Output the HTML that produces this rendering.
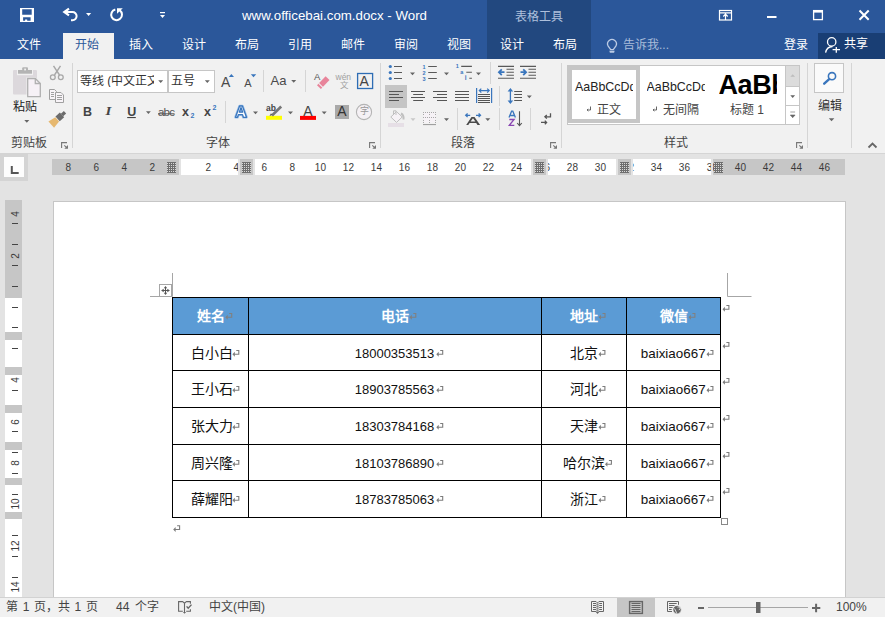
<!DOCTYPE html>
<html lang="zh-CN"><head><meta charset="utf-8">
<style>
*{margin:0;padding:0;box-sizing:border-box}
html,body{width:885px;height:617px;overflow:hidden;background:#e3e3e3;font-family:"Liberation Sans",sans-serif;position:relative}
.a{position:absolute}
.t{position:absolute;white-space:nowrap;line-height:1}
svg{position:absolute;overflow:visible}
#title{left:0;top:0;width:885px;height:59px;background:#2b579a}
#ctx{left:487px;top:0;width:104px;height:59px;background:#22487f}
#share{left:818px;top:33px;width:67px;height:26px;background:#193e74}
.tab{color:#fff;font-size:12px}
#ribbon{left:0;top:59px;width:885px;height:95px;background:#f1f1f1;border-bottom:1px solid #d5d5d5}
.sep{position:absolute;width:1px;background:#d5d5d5}
.lbl{color:#444;font-size:12px}
#status{left:0;top:597px;width:885px;height:20px;background:#f1f1f1;border-top:1px solid #d2d2d2}
#page{left:53px;top:201px;width:793px;height:396px;background:#fff;border:1px solid #c6c6c6;border-bottom:none}
.rul{position:absolute;background:#fff}
.rg{position:absolute;background:#c6c6c6}
.cell{position:absolute;height:37px;display:flex;justify-content:center;align-items:center;line-height:1;padding-left:1.4px;white-space:nowrap}
.rn{position:absolute;font-size:10px;color:#3a3a3a;line-height:1}
</style></head><body>
<!-- title bar -->
<div class="a" id="title"></div>
<div class="a" id="ctx"></div>
<div class="a" id="share"></div>
<div class="a" style="left:63px;top:33px;width:51px;height:26px;background:#f1f1f1"></div>
<div class="t" style="left:242px;top:9px;font-size:13.3px;color:#fff">www.officebai.com.docx - Word</div>
<div class="t" style="left:515px;top:11px;font-size:12px;color:#aec0dc">表格工具</div>

<div class="t tab" style="left:17px;top:38.6px">文件</div>
<div class="t tab" style="left:75px;top:38.6px;color:#2b579a">开始</div>
<div class="t tab" style="left:129px;top:38.6px">插入</div>
<div class="t tab" style="left:182px;top:38.6px">设计</div>
<div class="t tab" style="left:235px;top:38.6px">布局</div>
<div class="t tab" style="left:288px;top:38.6px">引用</div>
<div class="t tab" style="left:341px;top:38.6px">邮件</div>
<div class="t tab" style="left:394px;top:38.6px">审阅</div>
<div class="t tab" style="left:447px;top:38.6px">视图</div>
<div class="t tab" style="left:500px;top:38.6px">设计</div>
<div class="t tab" style="left:553px;top:38.6px">布局</div>
<div class="t tab" style="left:623px;top:39px;color:#a9bcd9">告诉我...</div>
<div class="t tab" style="left:784px;top:38.6px">登录</div>
<div class="t tab" style="left:844px;top:38.3px">共享</div>


<!-- title icons -->
<svg style="left:0;top:0" width="885" height="58">
 <path fill="#fff" fill-rule="evenodd" d="M20 8h14v14H20z M22.2 9.3h9.5v5.4h-9.5z M23.1 17.2h7.5v3.6h-3.4v-1.4h-2.1v1.4h-2z"/>
 <path d="M69 8.7L64.3 12L69 15.3" fill="none" stroke="#fff" stroke-width="2.2"/>
 <path d="M64 12H72.5A4.1 4.1 0 0 1 72.5 20.2H71" fill="none" stroke="#fff" stroke-width="2"/>
 <path d="M86 13h5.2l-2.6 3z" fill="#fff"/>
 <path d="M115.3 9.5A5.4 5.4 0 1 0 119.8 10.4" fill="none" stroke="#fff" stroke-width="2"/>
 <path d="M117 8.3h5.8L117 13.8z" fill="#fff"/>
 <rect x="160" y="12" width="5" height="1.2" fill="#fff"/>
 <path d="M160 15h5l-2.5 3z" fill="#fff"/>
 <rect x="719.5" y="10.5" width="12" height="9.5" fill="none" stroke="#fff" stroke-width="1.2"/>
 <path d="M719.5 12.8h12M725.5 13.5V20M723.3 16.5l2.2-2.4 2.2 2.4" fill="none" stroke="#fff" stroke-width="1.2"/>
 <rect x="767" y="16" width="9.5" height="2" fill="#fff"/>
 <rect x="813.6" y="10.6" width="8.8" height="9" fill="none" stroke="#fff" stroke-width="1.3"/>
 <rect x="813" y="10" width="10" height="2.6" fill="#fff"/>
 <path d="M859.5 10.5l9.2 9.2M868.7 10.5l-9.2 9.2" stroke="#fff" stroke-width="2"/>
 <circle cx="831.7" cy="41.9" r="4.2" fill="none" stroke="#fff" stroke-width="1.3"/>
 <path d="M825.6 52.6A7.5 7.5 0 0 1 832.5 46.5" fill="none" stroke="#fff" stroke-width="1.3"/>
 <path d="M832.6 49.7h7.4M836.3 47v5.7" stroke="#fff" stroke-width="1.3"/>
 <path d="M610.7 49.6L608.2 46.1A4.4 4.4 0 1 1 615.8 46.1L613.3 49.6Z" fill="none" stroke="#bccbe4" stroke-width="1.3"/>
 <path d="M609.3 50.8h5.4l-0.6 2h-4.2z" fill="#bccbe4"/>
</svg>

<!-- ribbon -->
<div class="a" id="ribbon"></div>
<div class="t lbl" style="left:10.5px;top:137px">剪贴板</div>
<div class="t lbl" style="left:206px;top:137px">字体</div>
<div class="t lbl" style="left:451px;top:137px">段落</div>
<div class="t lbl" style="left:664px;top:137px">样式</div>
<div class="sep" style="left:72px;top:63px;height:85px"></div>
<div class="sep" style="left:380px;top:63px;height:85px"></div>
<div class="sep" style="left:561px;top:63px;height:85px"></div>
<div class="sep" style="left:807px;top:63px;height:85px"></div>
<div class="sep" style="left:851px;top:63px;height:85px"></div>


<!-- clipboard -->
<svg style="left:0;top:0" width="885" height="153">
 <rect x="13" y="70" width="24" height="24.6" rx="1" fill="#dcd8dc"/>
 <rect x="17" y="69" width="16" height="6.2" fill="#f1f1f1"/>
 <rect x="18" y="70" width="14" height="3.7" fill="#b4b4b4"/>
 <rect x="22.2" y="67.2" width="5.8" height="3.5" rx="1" fill="#b4b4b4"/>
 <rect x="24.2" y="68.6" width="1.8" height="1.8" fill="#f1f1f1"/>
 <path d="M26.5 77.3h9l5.2 5.2v15H26.5z" fill="#f1f1f1"/>
 <path d="M27.7 78.5h7.6l5 5v13.2H27.7z" fill="#f6f1f6" stroke="#b0b0b0" stroke-width="1.3"/>
 <path d="M35.3 78.5v5h5" fill="none" stroke="#b0b0b0" stroke-width="1.3"/>
 <!-- scissors -->
 <path d="M53.5 65.8L59.5 75M60.5 65.8L54.5 75" stroke="#a8a8a8" stroke-width="1.4"/>
 <circle cx="52.8" cy="77.2" r="2.4" fill="none" stroke="#a8a8a8" stroke-width="1.3"/>
 <circle cx="60.8" cy="77.2" r="2.4" fill="none" stroke="#a8a8a8" stroke-width="1.3"/>
 <!-- copy -->
 <path d="M49.5 89.5h5l2 2v8H49.5z" fill="#f8f4f8" stroke="#a0a0a0" stroke-width="1"/>
 <path d="M51 92.5h3M51 94.5h3M51 96.5h3" stroke="#a0a0a0" stroke-width="1"/>
 <path d="M55.5 92.5h5.5l2.5 2.5v7.5H55.5z" fill="#f8f4f8" stroke="#a0a0a0" stroke-width="1"/>
 <path d="M57 95.5h5M57 97.5h5M57 99.5h5" stroke="#a0a0a0" stroke-width="1"/>
 <!-- format painter -->
 <g transform="translate(52,124) rotate(-42)">
  <path d="M-1 -4.2L7 -2.8V2.8L-1 4.2z" fill="#e6b870"/>
  <rect x="7.5" y="-3.2" width="6" height="6.4" fill="#6b6b6b"/>
  <rect x="13.5" y="-1.7" width="4" height="3.4" fill="#6b6b6b"/>
 </g>
 <path d="M24.3 120h5l-2.5 2.8z" fill="#666"/>
 <g transform="translate(0,0)"><path d="M61.6 148V142.6H67" fill="none" stroke="#777" stroke-width="1.1"/><path d="M64.3 148.8H68V145.1z" fill="#777"/><path d="M64.3 145.3l2.6 2.6" stroke="#777" stroke-width="1.1"/></g>
 <g transform="translate(308,0)"><path d="M61.6 148V142.6H67" fill="none" stroke="#777" stroke-width="1.1"/><path d="M64.3 148.8H68V145.1z" fill="#777"/><path d="M64.3 145.3l2.6 2.6" stroke="#777" stroke-width="1.1"/></g>
 <g transform="translate(489,0)"><path d="M61.6 148V142.6H67" fill="none" stroke="#777" stroke-width="1.1"/><path d="M64.3 148.8H68V145.1z" fill="#777"/><path d="M64.3 145.3l2.6 2.6" stroke="#777" stroke-width="1.1"/></g>
 <g transform="translate(735,0)"><path d="M61.6 148V142.6H67" fill="none" stroke="#777" stroke-width="1.1"/><path d="M64.3 148.8H68V145.1z" fill="#777"/><path d="M64.3 145.3l2.6 2.6" stroke="#777" stroke-width="1.1"/></g>
 <path d="M868.5 147.5l4-4 4 4" fill="none" stroke="#666" stroke-width="1.8"/>
</svg>
<div class="t" style="left:13px;top:101px;font-size:12px;color:#222">粘贴</div>
<!-- font group -->
<div class="a" style="left:77px;top:70px;width:91px;height:23px;background:#fff;border:1px solid #c6c6c6"></div>
<div class="a" style="left:168px;top:70px;width:47px;height:23px;background:#fff;border:1px solid #c6c6c6"></div>
<div class="t" style="left:80px;top:75px;font-size:12px;color:#333;width:74px;overflow:hidden">等线 (中文正文)</div>
<div class="t" style="left:171px;top:75px;font-size:12px;color:#333">五号</div>
<svg style="left:0;top:0" width="885" height="153">
 <path d="M158.2 80.2h5l-2.5 2.8z M204.8 80.2h5l-2.5 2.8z M291.2 80h5l-2.5 2.8z M410 72.5h5l-2.5 2.8z M444 72.5h5l-2.5 2.8z M476 72.5h5l-2.5 2.8z M526.8 95.5h5l-2.5 2.8z" fill="#666"/>
 <path d="M228.8 77h5.2l-2.6-3.1z" fill="#3a76bd"/>
 <path d="M250.8 74.2h5.4l-2.7 3.1z" fill="#3a76bd"/>
 <path d="M146 111.3h4.8l-2.4 2.6z M253 111.6h5l-2.5 2.6z M288 111.6h5l-2.5 2.6z M321.7 111.6h5l-2.5 2.6z M444 118.2h5l-2.5 2.7z M485.3 118.2h5l-2.5 2.7z" fill="#666"/>
 <path d="M410.5 118.2h5l-2.5 2.7z" fill="#c8c8c8"/>
</svg>
<div class="t" style="left:221px;top:74.8px;font-size:14px;color:#4a4a4a">A</div>
<div class="t" style="left:244.3px;top:78px;font-size:11px;color:#4a4a4a">A</div>
<div class="sep" style="left:263px;top:70px;height:22px"></div>
<div class="t" style="left:270.5px;top:74px;font-size:13px;color:#4a4a4a">Aa</div>
<div class="sep" style="left:305px;top:70px;height:22px"></div>


<!-- font row 2 -->
<div class="t" style="left:83px;top:105.8px;font-size:12.5px;font-weight:bold;color:#444">B</div>
<div class="t" style="left:106.3px;top:103.8px;font-size:13px;font-weight:bold;font-style:italic;font-family:'Liberation Serif',serif;color:#444;transform:scaleX(1.15)">I</div>
<div class="t" style="left:127.3px;top:105.8px;font-size:12.5px;font-weight:bold;color:#444">U</div>
<div class="t" style="left:158px;top:107px;font-size:11.5px;color:#555;letter-spacing:-0.8px">abc</div>
<div class="t" style="left:182px;top:106px;font-size:12.5px;font-weight:bold;color:#444">x</div>
<div class="t" style="left:190.5px;top:112px;font-size:7px;font-weight:bold;color:#3a76bd">2</div>
<div class="t" style="left:204px;top:106px;font-size:12.5px;font-weight:bold;color:#444">x</div>
<div class="t" style="left:212.6px;top:104px;font-size:7px;font-weight:bold;color:#3a76bd">2</div>
<svg style="left:0;top:0" width="885" height="153">
 <rect x="127.2" y="117" width="8.6" height="1.1" fill="#444"/>
 <rect x="158" y="113.3" width="16.5" height="1" fill="#555"/>
 <!-- text effects A -->
 <path d="M235.5 117.3L239.6 106h2.8L246.5 117.3h-3.1l-0.9-2.7h-4.1l-0.9 2.7z M239.3 112.2h3.4l-1.7-4.6z" fill="#fff" stroke="#9cc0e8" stroke-width="2.6" stroke-linejoin="round" fill-rule="evenodd"/>
 <path d="M235.5 117.3L239.6 106h2.8L246.5 117.3h-3.1l-0.9-2.7h-4.1l-0.9 2.7z M239.3 112.2h3.4l-1.7-4.6z" fill="#fff" stroke="#3a76bd" stroke-width="1.3" stroke-linejoin="round" fill-rule="evenodd"/>
 <!-- highlight -->
 <rect x="266" y="115.8" width="16" height="4" fill="#ffff00"/>
 <path d="M281.2 106.5L272 115.5" stroke="#777" stroke-width="2.6"/>
 <path d="M271 113.3L269.5 116L272.3 115" fill="#555"/>
 <!-- font color -->
 <rect x="300" y="115.9" width="16" height="4" fill="#ff0000"/>
 <!-- shading -->
 <rect x="335" y="105" width="14" height="14" fill="#a9a9a9"/>
 <!-- enclose -->
 <circle cx="364" cy="112" r="7.6" fill="#f5f1f5" stroke="#b4b4b4" stroke-width="1.1"/>
 <!-- clear format eraser -->
 <path d="M317 85.3L325.6 76.3L329.5 80L320.9 89z" fill="#e8849a"/>
 <path d="M318.5 83.2L323 87.6" stroke="#f1f1f1" stroke-width="1.1"/>
 <!-- char border -->
 <rect x="357.6" y="73.5" width="15" height="15" fill="none" stroke="#2e6db4" stroke-width="1.3"/>
</svg>
<div class="t" style="left:266px;top:103.5px;font-size:8.5px;font-weight:bold;color:#444">ab</div>
<div class="t" style="left:303.2px;top:104px;font-size:14px;color:#444">A</div>
<div class="t" style="left:337.2px;top:104.3px;font-size:14px;color:#333">A</div>
<div class="t" style="left:359.5px;top:106.5px;font-size:9px;color:#999">字</div>
<div class="t" style="left:314px;top:71.5px;font-size:9.5px;color:#555">A</div>
<div class="t" style="left:335.5px;top:73px;font-size:8.5px;color:#a0a0a0">wén</div>
<div class="t" style="left:339.5px;top:80.5px;font-size:8.5px;color:#a0a0a0">文</div>
<div class="t" style="left:359.5px;top:73.5px;font-size:14px;color:#444">A</div>
<div class="sep" style="left:225px;top:101px;height:22px"></div>


<!-- paragraph group -->
<svg style="left:0;top:0" width="885" height="153">
 <g fill="#3a76bd"><circle cx="390.3" cy="66.5" r="1.6"/><circle cx="390.3" cy="72.5" r="1.6"/><circle cx="390.3" cy="78.5" r="1.6"/></g>
 <path d="M394 66.5h8M394 72.5h8M394 78.5h8 M428.2 66.5h8.6M428.2 72.5h8.6M428.2 78.5h8.6 M461.2 66.4h10.7M466.3 72.3h5.6M469.3 78.3h2.6" stroke="#595959" stroke-width="1.1"/>
 <path d="M498 66.4h16M506.5 69.3h7.4M506.5 72.2h7.4M506.5 75.2h7.4M498 78.3h16 M520 66.4h16M528.5 69.3h7.5M528.5 72.2h7.5M528.5 75.2h7.5M520 78.3h16" stroke="#595959" stroke-width="1.1"/>
 <path d="M504.5 72.2h-5.5M501.8 69.3l-2.9 2.9 2.9 2.9 M520.5 72.2h5.5M523.2 69.3l2.9 2.9-2.9 2.9" fill="none" stroke="#3a76bd" stroke-width="1.8"/>
 <rect x="385" y="85" width="22" height="23" fill="#c5c5c5"/>
 <path d="M389 91.5h14M389 94.5h10M389 97.5h14M389 100.5h10 M411 91.5h14M413.2 94.5h9.8M411 97.5h14M413.2 100.5h9.8 M433 91.5h14M437 94.5h10M433 97.5h14M437 100.5h10 M455 91.5h14M455 94.5h14M455 97.5h14M455 100.5h14 M478 94.4h12M478 96.4h12M478 98.4h12M478 100.4h12M478 102.5h12 M514.2 91.5h7.8M514.2 94.5h7.8M514.2 97.5h7.8M514.2 100.5h7.8" stroke="#555" stroke-width="1.05"/>
 <path d="M476.6 88v15M491.6 88v15" stroke="#3a76bd" stroke-width="1.2"/>
 <path d="M479 90.6h10.5M481.3 88.6l-2 2 2 2M487.2 88.6l2 2-2 2" fill="none" stroke="#3a76bd" stroke-width="1.2"/>
 <path d="M510.4 90v12" stroke="#3a76bd" stroke-width="1.3"/><path d="M507.6 91.6L510.4 88.1L513.2 91.6z M507.6 100.4L510.4 103.9L513.2 100.4z" fill="#3a76bd"/>
 <!-- shading bucket disabled -->
 <rect x="388" y="123" width="16" height="4" fill="#e6dfe6"/>
 <path d="M390.8 117L396.5 111.6L402.2 117L396.5 122.4z" fill="#f6f2f6" stroke="#c0c0c0" stroke-width="1"/>
 <path d="M393.5 115V110.8h2.5V115" fill="none" stroke="#c0c0c0" stroke-width="1"/>
 <path d="M401 113.5q3 1.5 2.5 6" fill="none" stroke="#c0c0c0" stroke-width="2"/>
 <!-- borders -->
 <rect x="423.5" y="112.3" width="12.2" height="10.3" fill="#f6f2f6"/>
 <g fill="#a8a8a8">
 <path d="M423 112h1v1h-1zM425 112h1v1h-1zM427 112h1v1h-1zM429 112h1v1h-1zM431 112h1v1h-1zM433 112h1v1h-1zM435 112h1v1h-1z"/>
 <path d="M423 117h1v1h-1zM425 117h1v1h-1zM427 117h1v1h-1zM429 117h1v1h-1zM431 117h1v1h-1zM433 117h1v1h-1zM435 117h1v1h-1z"/>
 <path d="M423 114h1v1h-1zM423 120h1v1h-1zM423 122h1v1h-1zM429 114h1v1h-1zM429 120h1v1h-1zM429 122h1v1h-1zM435 114h1v1h-1zM435 120h1v1h-1zM435 122h1v1h-1z"/>
 </g>
 <rect x="423" y="124" width="13" height="1.1" fill="#a0a0a0"/>
 <!-- asian layout -->
 <path d="M466.2 125L471.5 117h3l5.6 8h-2.6l-1.3-2h-6.6l-1.3 2z M470.6 121.6h4.8l-2.4-3.4z" fill="#4a4a4a" fill-rule="evenodd"/>
 <path d="M465.7 115.3h4.5M467.6 113.5l-1.9 1.8 1.9 1.8 M480.5 115.3h-4.5M478.6 113.5l1.9 1.8-1.9 1.8" fill="none" stroke="#3a76bd" stroke-width="1.3"/>
 <!-- sort -->
 <path d="M509 117.6l2.6-6.4h1.2l2.6 6.4M510 115.5h4.3" fill="none" stroke="#3a76bd" stroke-width="1.3"/>
 <path d="M509.3 119.5h4.8l-4.8 5.8h5" fill="none" stroke="#8a47b3" stroke-width="1.3"/>
 <path d="M519.5 111.2v14M517.2 123l2.3 2.7 2.3-2.7" fill="none" stroke="#555" stroke-width="1.1"/>
 <!-- show hide -->
 <path d="M550.5 113.2v3.6h-5.5M546.8 115l-1.9 1.8 1.9 1.8 M541 122.4h5.6M544.8 120.6l1.8 1.8-1.8 1.8" fill="none" stroke="#555" stroke-width="1.3"/>
</svg>
<div class="sep" style="left:490px;top:62px;height:22px"></div>
<div class="sep" style="left:499px;top:86px;height:20px"></div>
<div class="sep" style="left:457px;top:108px;height:22px"></div>
<div class="sep" style="left:499px;top:108px;height:22px"></div>
<div class="sep" style="left:530px;top:108px;height:22px"></div>
<div class="t" style="left:422.5px;top:64px;font-size:5.5px;font-weight:bold;color:#3a76bd;line-height:6px;white-space:pre">1
2
3</div>
<div class="t" style="left:455.8px;top:64.3px;font-size:5.5px;font-weight:bold;color:#3a76bd">1</div>
<div class="t" style="left:460.2px;top:69.5px;font-size:5.5px;font-weight:bold;color:#3a76bd">a</div>
<div class="t" style="left:464.8px;top:74.8px;font-size:6.5px;font-weight:bold;color:#3a76bd">i</div>


<!-- styles group -->
<div class="a" style="left:567px;top:65px;width:233px;height:60px;background:#fff;border:1px solid #c6c6c6"></div>
<div class="a" style="left:568px;top:66px;width:72px;height:57px;border:4px solid #c6c6c6;background:#fff"></div>
<div class="a" style="left:785px;top:65px;width:15px;height:60px;border:1px solid #c6c6c6"></div>
<div class="a" style="left:786px;top:66px;width:13px;height:20.5px;background:#dcdcdc"></div>
<div class="a" style="left:785px;top:86px;width:15px;height:1px;background:#c6c6c6"></div>
<div class="a" style="left:785px;top:105px;width:15px;height:1px;background:#c6c6c6"></div>
<div class="t" style="left:575px;top:80.5px;font-size:12.4px;color:#222;width:58px;overflow:hidden">AaBbCcDd</div>
<div class="t" style="left:646.5px;top:80.5px;font-size:12.4px;color:#222;width:58px;overflow:hidden">AaBbCcDd</div>
<div class="t" style="left:718.5px;top:72px;font-size:27px;font-weight:bold;color:#000;width:58px;overflow:hidden;letter-spacing:-0.4px">AaBb</div>
<div class="t" style="left:597px;top:104px;font-size:12px;color:#444">正文</div>
<div class="t" style="left:662.5px;top:104px;font-size:12px;color:#444">无间隔</div>
<div class="t" style="left:730px;top:103.5px;font-size:12px;color:#444">标题 1</div>
<svg style="left:0;top:0" width="885" height="153">
 <path d="M590.5 106.5v3.5h-3.3M588.3 108.8l-1.2 1.2 1.2 1.2" fill="none" stroke="#555" stroke-width="0.9"/>
 <path d="M656.5 106.5v3.5h-3.3M654.3 108.8l-1.2 1.2 1.2 1.2" fill="none" stroke="#555" stroke-width="0.9"/>
 <path d="M790.3 76.7l2.4-2.5 2.4 2.5z" fill="#bdbdbd"/>
 <path d="M790.3 95.3h4.8l-2.4 2.7z" fill="#666"/>
 <path d="M790.3 112h4.8M790.3 115h4.8l-2.4 2.7z" fill="#666" stroke="#666" stroke-width="0.6"/>
 <!-- editing -->
 <rect x="814.5" y="63.5" width="29" height="29" fill="#fafafa" stroke="#c6c6c6" stroke-width="1"/>
 <circle cx="832" cy="76.2" r="3.6" fill="none" stroke="#3a76bd" stroke-width="1.6"/>
 <path d="M829.2 79.2l-5 4.5" stroke="#3a76bd" stroke-width="2.4" stroke-linecap="round"/>
 <path d="M828.8 118.2h5.5l-2.75 3z" fill="#666"/>
</svg>
<div class="t" style="left:818px;top:100px;font-size:12px;color:#333">编辑</div>

<!-- canvas -->
<div class="a" style="left:0;top:153px;width:28px;height:28px;background:#d4d4d4"></div>
<div class="a" style="left:4px;top:157px;width:20px;height:20px;background:#fdfdfd"></div>
<svg style="left:0;top:0" width="30" height="185"><path d="M11.8 166v7h6.9" fill="none" stroke="#555" stroke-width="2"/></svg>
<div class="a" style="left:52px;top:159px;width:793px;height:16px;background:#c6c6c6"></div>
<div class="a" style="left:181px;top:159px;width:530px;height:16px;background:#fff"></div>
<div class="rn" style="left:142.4px;top:162.5px;width:20px;text-align:center">2</div>
<div class="rn" style="left:114.4px;top:162.5px;width:20px;text-align:center">4</div>
<div class="rn" style="left:86.4px;top:162.5px;width:20px;text-align:center">6</div>
<div class="rn" style="left:58.4px;top:162.5px;width:20px;text-align:center">8</div>
<div class="rn" style="left:198.4px;top:162.5px;width:20px;text-align:center">2</div>
<div class="rn" style="left:226.4px;top:162.5px;width:20px;text-align:center">4</div>
<div class="rn" style="left:254.4px;top:162.5px;width:20px;text-align:center">6</div>
<div class="rn" style="left:282.4px;top:162.5px;width:20px;text-align:center">8</div>
<div class="rn" style="left:310.4px;top:162.5px;width:20px;text-align:center">10</div>
<div class="rn" style="left:338.4px;top:162.5px;width:20px;text-align:center">12</div>
<div class="rn" style="left:366.4px;top:162.5px;width:20px;text-align:center">14</div>
<div class="rn" style="left:394.4px;top:162.5px;width:20px;text-align:center">16</div>
<div class="rn" style="left:422.4px;top:162.5px;width:20px;text-align:center">18</div>
<div class="rn" style="left:450.4px;top:162.5px;width:20px;text-align:center">20</div>
<div class="rn" style="left:478.4px;top:162.5px;width:20px;text-align:center">22</div>
<div class="rn" style="left:506.4px;top:162.5px;width:20px;text-align:center">24</div>
<div class="rn" style="left:534.4px;top:162.5px;width:20px;text-align:center">26</div>
<div class="rn" style="left:562.4px;top:162.5px;width:20px;text-align:center">28</div>
<div class="rn" style="left:590.4px;top:162.5px;width:20px;text-align:center">30</div>
<div class="rn" style="left:618.4px;top:162.5px;width:20px;text-align:center">32</div>
<div class="rn" style="left:646.4px;top:162.5px;width:20px;text-align:center">34</div>
<div class="rn" style="left:674.4px;top:162.5px;width:20px;text-align:center">36</div>
<div class="rn" style="left:702.4px;top:162.5px;width:20px;text-align:center">38</div>
<div class="rn" style="left:730.4px;top:162.5px;width:20px;text-align:center">40</div>
<div class="rn" style="left:758.4px;top:162.5px;width:20px;text-align:center">42</div>
<div class="rn" style="left:786.4px;top:162.5px;width:20px;text-align:center">44</div>
<div class="rn" style="left:814.4px;top:162.5px;width:20px;text-align:center">46</div>
<div class="a" style="left:179px;top:159px;width:2px;height:16px;background:#e3e3e3"></div>
<div class="a" style="left:238px;top:159px;width:2px;height:16px;background:#e3e3e3"></div>
<div class="a" style="left:253px;top:159px;width:2px;height:16px;background:#e3e3e3"></div>
<div class="a" style="left:531px;top:159px;width:2px;height:16px;background:#e3e3e3"></div>
<div class="a" style="left:546px;top:159px;width:2px;height:16px;background:#e3e3e3"></div>
<div class="a" style="left:616px;top:159px;width:2px;height:16px;background:#e3e3e3"></div>
<div class="a" style="left:631px;top:159px;width:2px;height:16px;background:#e3e3e3"></div>
<div class="a" style="left:711px;top:159px;width:2px;height:16px;background:#e3e3e3"></div>
<div class="a" style="left:240px;top:159px;width:13px;height:16px;background:#c6c6c6"></div>
<div class="a" style="left:533px;top:159px;width:13px;height:16px;background:#c6c6c6"></div>
<div class="a" style="left:618px;top:159px;width:13px;height:16px;background:#c6c6c6"></div>
<svg style="left:167px;top:162px" width="9" height="11" shape-rendering="crispEdges"><path d="M0 0h9v11H0z" fill="#6e6e6e"/><path d="M0 1h1v1h-1zM0 3h1v1h-1zM0 5h1v1h-1zM0 7h1v1h-1zM0 9h1v1h-1zM2 1h1v1h-1zM2 3h1v1h-1zM2 5h1v1h-1zM2 7h1v1h-1zM2 9h1v1h-1zM4 1h1v1h-1zM4 3h1v1h-1zM4 5h1v1h-1zM4 7h1v1h-1zM4 9h1v1h-1zM6 1h1v1h-1zM6 3h1v1h-1zM6 5h1v1h-1zM6 7h1v1h-1zM6 9h1v1h-1zM8 1h1v1h-1zM8 3h1v1h-1zM8 5h1v1h-1zM8 7h1v1h-1zM8 9h1v1h-1z" fill="#d8d8d8"/></svg>
<svg style="left:242px;top:162px" width="9" height="11" shape-rendering="crispEdges"><path d="M0 0h9v11H0z" fill="#6e6e6e"/><path d="M0 1h1v1h-1zM0 3h1v1h-1zM0 5h1v1h-1zM0 7h1v1h-1zM0 9h1v1h-1zM2 1h1v1h-1zM2 3h1v1h-1zM2 5h1v1h-1zM2 7h1v1h-1zM2 9h1v1h-1zM4 1h1v1h-1zM4 3h1v1h-1zM4 5h1v1h-1zM4 7h1v1h-1zM4 9h1v1h-1zM6 1h1v1h-1zM6 3h1v1h-1zM6 5h1v1h-1zM6 7h1v1h-1zM6 9h1v1h-1zM8 1h1v1h-1zM8 3h1v1h-1zM8 5h1v1h-1zM8 7h1v1h-1zM8 9h1v1h-1z" fill="#d8d8d8"/></svg>
<svg style="left:535px;top:162px" width="9" height="11" shape-rendering="crispEdges"><path d="M0 0h9v11H0z" fill="#6e6e6e"/><path d="M0 1h1v1h-1zM0 3h1v1h-1zM0 5h1v1h-1zM0 7h1v1h-1zM0 9h1v1h-1zM2 1h1v1h-1zM2 3h1v1h-1zM2 5h1v1h-1zM2 7h1v1h-1zM2 9h1v1h-1zM4 1h1v1h-1zM4 3h1v1h-1zM4 5h1v1h-1zM4 7h1v1h-1zM4 9h1v1h-1zM6 1h1v1h-1zM6 3h1v1h-1zM6 5h1v1h-1zM6 7h1v1h-1zM6 9h1v1h-1zM8 1h1v1h-1zM8 3h1v1h-1zM8 5h1v1h-1zM8 7h1v1h-1zM8 9h1v1h-1z" fill="#d8d8d8"/></svg>
<svg style="left:620px;top:162px" width="9" height="11" shape-rendering="crispEdges"><path d="M0 0h9v11H0z" fill="#6e6e6e"/><path d="M0 1h1v1h-1zM0 3h1v1h-1zM0 5h1v1h-1zM0 7h1v1h-1zM0 9h1v1h-1zM2 1h1v1h-1zM2 3h1v1h-1zM2 5h1v1h-1zM2 7h1v1h-1zM2 9h1v1h-1zM4 1h1v1h-1zM4 3h1v1h-1zM4 5h1v1h-1zM4 7h1v1h-1zM4 9h1v1h-1zM6 1h1v1h-1zM6 3h1v1h-1zM6 5h1v1h-1zM6 7h1v1h-1zM6 9h1v1h-1zM8 1h1v1h-1zM8 3h1v1h-1zM8 5h1v1h-1zM8 7h1v1h-1zM8 9h1v1h-1z" fill="#d8d8d8"/></svg>
<svg style="left:714px;top:162px" width="9" height="11" shape-rendering="crispEdges"><path d="M0 0h9v11H0z" fill="#6e6e6e"/><path d="M0 1h1v1h-1zM0 3h1v1h-1zM0 5h1v1h-1zM0 7h1v1h-1zM0 9h1v1h-1zM2 1h1v1h-1zM2 3h1v1h-1zM2 5h1v1h-1zM2 7h1v1h-1zM2 9h1v1h-1zM4 1h1v1h-1zM4 3h1v1h-1zM4 5h1v1h-1zM4 7h1v1h-1zM4 9h1v1h-1zM6 1h1v1h-1zM6 3h1v1h-1zM6 5h1v1h-1zM6 7h1v1h-1zM6 9h1v1h-1zM8 1h1v1h-1zM8 3h1v1h-1zM8 5h1v1h-1zM8 7h1v1h-1zM8 9h1v1h-1z" fill="#d8d8d8"/></svg>
<div class="a" style="left:5px;top:200px;width:17px;height:397px;background:#c6c6c6"></div>
<div class="a" style="left:5px;top:298px;width:17px;height:299px;background:#fff"></div>
<div class="a" style="left:5px;top:332px;width:17px;height:8px;background:#c6c6c6"></div>
<div class="a" style="left:5px;top:367px;width:17px;height:8px;background:#c6c6c6"></div>
<div class="a" style="left:5px;top:405px;width:17px;height:8px;background:#c6c6c6"></div>
<div class="a" style="left:5px;top:442px;width:17px;height:8px;background:#c6c6c6"></div>
<div class="a" style="left:5px;top:478px;width:17px;height:7px;background:#c6c6c6"></div>
<div class="a" style="left:5px;top:512px;width:17px;height:7px;background:#c6c6c6"></div>
<svg style="left:0;top:0" width="30" height="617"><path d="M12 223.5h6M12 244.5h6M12 265.5h6M12 286.5h6M12 307.5h6M12 327.5h6M12 348.5h6M12 390.5h6M12 431.5h6M12 452.5h6M12 473.5h6M12 494.5h6M12 535.5h6M12 556.5h6M12 577.5h6" stroke="#444" stroke-width="1"/></svg>
<div class="rn" style="left:5.5px;top:208.5px;width:20px;height:10px;line-height:10px;text-align:center;transform:rotate(-90deg)">4</div>
<div class="rn" style="left:5.5px;top:250.5px;width:20px;height:10px;line-height:10px;text-align:center;transform:rotate(-90deg)">2</div>
<div class="rn" style="left:5.5px;top:375.2px;width:20px;height:10px;line-height:10px;text-align:center;transform:rotate(-90deg)">4</div>
<div class="rn" style="left:5.5px;top:416.5px;width:20px;height:10px;line-height:10px;text-align:center;transform:rotate(-90deg)">6</div>
<div class="rn" style="left:5.5px;top:458.2px;width:20px;height:10px;line-height:10px;text-align:center;transform:rotate(-90deg)">8</div>
<div class="rn" style="left:5.5px;top:499.2px;width:20px;height:10px;line-height:10px;text-align:center;transform:rotate(-90deg)">10</div>
<div class="rn" style="left:5.5px;top:540.5px;width:20px;height:10px;line-height:10px;text-align:center;transform:rotate(-90deg)">12</div>
<div class="rn" style="left:5.5px;top:581.8px;width:20px;height:10px;line-height:10px;text-align:center;transform:rotate(-90deg)">14</div>
<div class="a" id="page"></div>

<!-- table -->
<div class="a" style="left:172px;top:297px;width:549px;height:38px;background:#5b9bd5"></div>
<svg style="left:0;top:0" width="885" height="617">
 <g fill="#000">
 <rect x="172" y="297" width="549" height="1"/>
 <rect x="172" y="334" width="549" height="1"/>
 <rect x="172" y="370" width="549" height="1"/>
 <rect x="172" y="407" width="549" height="1"/>
 <rect x="172" y="444" width="549" height="1"/>
 <rect x="172" y="480" width="549" height="1"/>
 <rect x="172" y="517" width="549" height="1"/>
 <rect x="172" y="297" width="1" height="221"/>
 <rect x="248" y="297" width="1" height="221"/>
 <rect x="541" y="297" width="1" height="221"/>
 <rect x="626" y="297" width="1" height="221"/>
 <rect x="720" y="297" width="1" height="221"/>
 </g>
 <path d="M172.5 273v23.5M150 296.5h22.5M727.5 273v23.5M727.5 296.5h24" stroke="#a6a6a6" stroke-width="1"/>
 <rect x="159.5" y="284.5" width="12" height="12" fill="#fff" stroke="#a6a6a6" stroke-width="1"/>
 <path d="M165.5 287v7M162 290.5h7" fill="none" stroke="#555" stroke-width="1"/>
 <path d="M163.8 288.3L165.5 286.1L167.2 288.3z M163.8 292.7L165.5 294.9L167.2 292.7z M163.7 288.8L161.1 290.5L163.7 292.2z M167.3 288.8L169.9 290.5L167.3 292.2z" fill="#555"/>
 <rect x="721.5" y="518.5" width="6" height="6" fill="#fff" stroke="#888" stroke-width="1"/>
</svg>

<div class="cell" style="left:172px;top:297px;width:76px;font-size:14px;font-weight:bold;color:#fff;"><span>姓名</span></div>
<div class="cell" style="left:248px;top:297px;width:293px;font-size:14px;font-weight:bold;color:#fff;"><span>电话</span></div>
<div class="cell" style="left:541px;top:297px;width:85px;font-size:14px;font-weight:bold;color:#fff;"><span>地址</span></div>
<div class="cell" style="left:626px;top:297px;width:94px;font-size:14px;font-weight:bold;color:#fff;"><span>微信</span></div>
<div class="cell" style="left:172px;top:334px;width:76px;font-size:14px;color:#111;transform:translateX(1.5px);"><span>白小白</span></div>
<div class="cell" style="left:248px;top:334px;width:293px;font-size:13px;color:#111;transform:translate(-0.7px,1px);"><span>18000353513</span></div>
<div class="cell" style="left:541px;top:334px;width:85px;font-size:14px;color:#111;"><span>北京</span></div>
<div class="cell" style="left:626px;top:334px;width:94px;font-size:13.4px;color:#111;transform:translate(-0.5px,0.8px);"><span>baixiao667</span></div>
<div class="cell" style="left:172px;top:370px;width:76px;font-size:14px;color:#111;transform:translateX(1.5px);"><span>王小石</span></div>
<div class="cell" style="left:248px;top:370px;width:293px;font-size:13px;color:#111;transform:translate(-0.7px,1px);"><span>18903785563</span></div>
<div class="cell" style="left:541px;top:370px;width:85px;font-size:14px;color:#111;"><span>河北</span></div>
<div class="cell" style="left:626px;top:370px;width:94px;font-size:13.4px;color:#111;transform:translate(-0.5px,0.8px);"><span>baixiao667</span></div>
<div class="cell" style="left:172px;top:407px;width:76px;font-size:14px;color:#111;transform:translateX(1.5px);"><span>张大力</span></div>
<div class="cell" style="left:248px;top:407px;width:293px;font-size:13px;color:#111;transform:translate(-0.7px,1px);"><span>18303784168</span></div>
<div class="cell" style="left:541px;top:407px;width:85px;font-size:14px;color:#111;"><span>天津</span></div>
<div class="cell" style="left:626px;top:407px;width:94px;font-size:13.4px;color:#111;transform:translate(-0.5px,0.8px);"><span>baixiao667</span></div>
<div class="cell" style="left:172px;top:444px;width:76px;font-size:14px;color:#111;transform:translateX(1.5px);"><span>周兴隆</span></div>
<div class="cell" style="left:248px;top:444px;width:293px;font-size:13px;color:#111;transform:translate(-0.7px,1px);"><span>18103786890</span></div>
<div class="cell" style="left:541px;top:444px;width:85px;font-size:14px;color:#111;"><span>哈尔滨</span></div>
<div class="cell" style="left:626px;top:444px;width:94px;font-size:13.4px;color:#111;transform:translate(-0.5px,0.8px);"><span>baixiao667</span></div>
<div class="cell" style="left:172px;top:480px;width:76px;font-size:14px;color:#111;transform:translateX(1.5px);"><span>薛耀阳</span></div>
<div class="cell" style="left:248px;top:480px;width:293px;font-size:13px;color:#111;transform:translate(-0.7px,1px);"><span>18783785063</span></div>
<div class="cell" style="left:541px;top:480px;width:85px;font-size:14px;color:#111;"><span>浙江</span></div>
<div class="cell" style="left:626px;top:480px;width:94px;font-size:13.4px;color:#111;transform:translate(-0.5px,0.8px);"><span>baixiao667</span></div>
<svg style="left:0;top:0" width="885" height="617"><path d="M229.2 313.5h2.5v3.8H226.8" fill="none" stroke="#808080" stroke-width="1.1"/><path d="M227.7 314.8L225.3 317.3L227.7 319.8z" fill="#808080"/>
<path d="M413.3 313.5h2.5v3.8H410.9" fill="none" stroke="#808080" stroke-width="1.1"/><path d="M411.8 314.8L409.4 317.3L411.8 319.8z" fill="#808080"/>
<path d="M602.5 313.5h2.5v3.8H600.1" fill="none" stroke="#808080" stroke-width="1.1"/><path d="M601.0 314.8L598.6 317.3L601.0 319.8z" fill="#808080"/>
<path d="M692.4 313.5h2.5v3.8H690.0" fill="none" stroke="#808080" stroke-width="1.1"/><path d="M690.9 314.8L688.5 317.3L690.9 319.8z" fill="#808080"/>
<path d="M726.4 305.5h2.5v3.8H724.0" fill="none" stroke="#7c7c7c" stroke-width="1.1"/><path d="M724.9 306.8L722.5 309.3L724.9 311.8z" fill="#7c7c7c"/>
<path d="M236.3 350.5h2.5v3.8H233.9" fill="none" stroke="#7c7c7c" stroke-width="1.1"/><path d="M234.8 351.8L232.4 354.3L234.8 356.8z" fill="#7c7c7c"/>
<path d="M440.2 350.5h2.5v3.8H437.8" fill="none" stroke="#7c7c7c" stroke-width="1.1"/><path d="M438.7 351.8L436.3 354.3L438.7 356.8z" fill="#7c7c7c"/>
<path d="M602.4 350.5h2.5v3.8H600.0" fill="none" stroke="#7c7c7c" stroke-width="1.1"/><path d="M600.9 351.8L598.5 354.3L600.9 356.8z" fill="#7c7c7c"/>
<path d="M710.4 350.5h2.5v3.8H708.0" fill="none" stroke="#7c7c7c" stroke-width="1.1"/><path d="M708.9 351.8L706.5 354.3L708.9 356.8z" fill="#7c7c7c"/>
<path d="M726.4 342.5h2.5v3.8H724.0" fill="none" stroke="#7c7c7c" stroke-width="1.1"/><path d="M724.9 343.8L722.5 346.3L724.9 348.8z" fill="#7c7c7c"/>
<path d="M236.3 386.5h2.5v3.8H233.9" fill="none" stroke="#7c7c7c" stroke-width="1.1"/><path d="M234.8 387.8L232.4 390.3L234.8 392.8z" fill="#7c7c7c"/>
<path d="M440.2 386.5h2.5v3.8H437.8" fill="none" stroke="#7c7c7c" stroke-width="1.1"/><path d="M438.7 387.8L436.3 390.3L438.7 392.8z" fill="#7c7c7c"/>
<path d="M602.4 386.5h2.5v3.8H600.0" fill="none" stroke="#7c7c7c" stroke-width="1.1"/><path d="M600.9 387.8L598.5 390.3L600.9 392.8z" fill="#7c7c7c"/>
<path d="M710.4 386.5h2.5v3.8H708.0" fill="none" stroke="#7c7c7c" stroke-width="1.1"/><path d="M708.9 387.8L706.5 390.3L708.9 392.8z" fill="#7c7c7c"/>
<path d="M726.4 378.5h2.5v3.8H724.0" fill="none" stroke="#7c7c7c" stroke-width="1.1"/><path d="M724.9 379.8L722.5 382.3L724.9 384.8z" fill="#7c7c7c"/>
<path d="M236.3 423.5h2.5v3.8H233.9" fill="none" stroke="#7c7c7c" stroke-width="1.1"/><path d="M234.8 424.8L232.4 427.3L234.8 429.8z" fill="#7c7c7c"/>
<path d="M440.2 423.5h2.5v3.8H437.8" fill="none" stroke="#7c7c7c" stroke-width="1.1"/><path d="M438.7 424.8L436.3 427.3L438.7 429.8z" fill="#7c7c7c"/>
<path d="M602.4 423.5h2.5v3.8H600.0" fill="none" stroke="#7c7c7c" stroke-width="1.1"/><path d="M600.9 424.8L598.5 427.3L600.9 429.8z" fill="#7c7c7c"/>
<path d="M710.4 423.5h2.5v3.8H708.0" fill="none" stroke="#7c7c7c" stroke-width="1.1"/><path d="M708.9 424.8L706.5 427.3L708.9 429.8z" fill="#7c7c7c"/>
<path d="M726.4 415.5h2.5v3.8H724.0" fill="none" stroke="#7c7c7c" stroke-width="1.1"/><path d="M724.9 416.8L722.5 419.3L724.9 421.8z" fill="#7c7c7c"/>
<path d="M236.3 460.5h2.5v3.8H233.9" fill="none" stroke="#7c7c7c" stroke-width="1.1"/><path d="M234.8 461.8L232.4 464.3L234.8 466.8z" fill="#7c7c7c"/>
<path d="M440.2 460.5h2.5v3.8H437.8" fill="none" stroke="#7c7c7c" stroke-width="1.1"/><path d="M438.7 461.8L436.3 464.3L438.7 466.8z" fill="#7c7c7c"/>
<path d="M608.9 460.5h2.5v3.8H606.5" fill="none" stroke="#7c7c7c" stroke-width="1.1"/><path d="M607.4 461.8L605.0 464.3L607.4 466.8z" fill="#7c7c7c"/>
<path d="M710.4 460.5h2.5v3.8H708.0" fill="none" stroke="#7c7c7c" stroke-width="1.1"/><path d="M708.9 461.8L706.5 464.3L708.9 466.8z" fill="#7c7c7c"/>
<path d="M726.4 452.5h2.5v3.8H724.0" fill="none" stroke="#7c7c7c" stroke-width="1.1"/><path d="M724.9 453.8L722.5 456.3L724.9 458.8z" fill="#7c7c7c"/>
<path d="M236.3 496.5h2.5v3.8H233.9" fill="none" stroke="#7c7c7c" stroke-width="1.1"/><path d="M234.8 497.8L232.4 500.3L234.8 502.8z" fill="#7c7c7c"/>
<path d="M440.2 496.5h2.5v3.8H437.8" fill="none" stroke="#7c7c7c" stroke-width="1.1"/><path d="M438.7 497.8L436.3 500.3L438.7 502.8z" fill="#7c7c7c"/>
<path d="M602.4 496.5h2.5v3.8H600.0" fill="none" stroke="#7c7c7c" stroke-width="1.1"/><path d="M600.9 497.8L598.5 500.3L600.9 502.8z" fill="#7c7c7c"/>
<path d="M710.4 496.5h2.5v3.8H708.0" fill="none" stroke="#7c7c7c" stroke-width="1.1"/><path d="M708.9 497.8L706.5 500.3L708.9 502.8z" fill="#7c7c7c"/>
<path d="M726.4 488.5h2.5v3.8H724.0" fill="none" stroke="#7c7c7c" stroke-width="1.1"/><path d="M724.9 489.8L722.5 492.3L724.9 494.8z" fill="#7c7c7c"/>
<path d="M177.1 525.7h2.5v3.8H174.7" fill="none" stroke="#7c7c7c" stroke-width="1.1"/><path d="M175.6 527.0L173.2 529.5L175.6 532.0z" fill="#7c7c7c"/></svg>

<!-- status bar -->
<div class="a" id="status"></div>

<div class="a" style="left:617px;top:598px;width:38px;height:19px;background:#c6c6c6"></div>
<svg style="left:0;top:0" width="885" height="617">
 <path d="M596.3 601.5H591.5V611.5H596.3M598.7 601.5H603.5V611.5H598.7" fill="none" stroke="#666" stroke-width="1"/>
 <path d="M593 603.5h3M593 605.5h3M593 607.5h3M593 609.5h3M599.2 603.5h2.8M599.2 605.5h2.8M599.2 607.5h2.8M599.2 609.5h2.8" stroke="#666" stroke-width="1"/>
 <path d="M597.5 602.3V612.5" stroke="#666" stroke-width="2.2" stroke-dasharray="1.2 0.8"/>
 <path d="M595.8 612h3.4l-1.7 2z" fill="#666"/>
 <rect x="629.6" y="601.6" width="12.8" height="11.8" fill="none" stroke="#666" stroke-width="1.4"/>
 <path d="M631.5 603.5h9M631.5 605.5h9M631.5 607.5h9M631.5 609.5h9M631.5 611.5h9" stroke="#666" stroke-width="1"/>
 <path d="M678.5 604.8V601.5H667.5V611.5H672" fill="none" stroke="#666" stroke-width="1"/>
 <path d="M669 603.5h7.7M669 605.5h5.6M669 607.5h3.6M669 609.5h2.7" stroke="#666" stroke-width="1"/>
 <circle cx="677.1" cy="609.7" r="4.2" fill="#666" stroke="#f1f1f1" stroke-width="0.8"/>
 <path d="M674.5 608.5l1.3 2.5 0.8 2.3M677.5 607.2l2 -0.5 0.8 2.3-1.5 0.8" fill="none" stroke="#d8d8d8" stroke-width="1"/>
 <rect x="698" y="607" width="6" height="2" fill="#666"/>
 <rect x="708" y="607" width="100" height="1" fill="#a6a6a6"/>
 <rect x="756" y="602" width="4.5" height="11" fill="#666"/>
 <path d="M812 608h8.3M816.1 603.8v8.4" stroke="#666" stroke-width="2"/>
 <path d="M182.8 601.6H178.6V611.3H182.8M186.2 601.6H190.4V603.8M190.4 609.3V611.3H186.2M182.8 601.6l1.7 1.7 1.7-1.7" fill="none" stroke="#666" stroke-width="1.1"/>
 <path d="M184.5 603.2V612.5" stroke="#666" stroke-width="1.1"/>
 <path d="M182.9 612h3.2l-1.6 1.8z" fill="#666"/>
 <path d="M186.6 606.4l1.6 1.8 3.3-3.6" fill="none" stroke="#666" stroke-width="1.4"/>
</svg>
<div class="t" style="left:6px;top:600.6px;font-size:12px;color:#444;word-spacing:1.3px">第 1 页，共 1 页</div>
<div class="t" style="left:116px;top:600.6px;font-size:12px;color:#444;word-spacing:2.5px">44 个字</div>
<div class="t" style="left:209px;top:600.7px;font-size:12px;color:#444">中文(中国)</div>
<div class="t" style="left:836px;top:601px;font-size:12px;color:#444">100%</div>
</body></html>
